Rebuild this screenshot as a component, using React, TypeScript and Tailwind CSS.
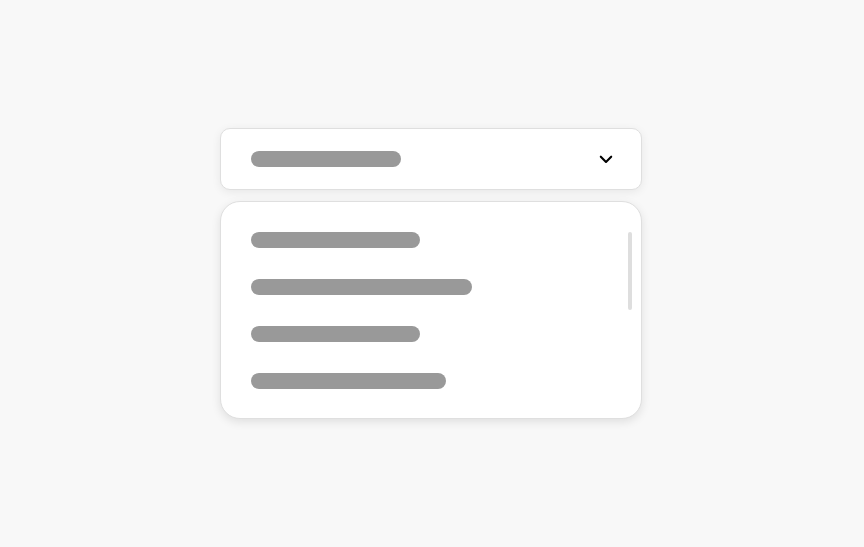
const options = [
  { id: 1, width: "w-[169px]" },
  { id: 2, width: "w-[221px]" },
  { id: 3, width: "w-[169px]" },
  { id: 4, width: "w-[195px]" },
];

const ChevronIcon = () => (
  <svg
    viewBox="0 0 16 16"
    className="h-4 w-4 text-black"
    fill="none"
    stroke="currentColor"
    strokeWidth="2.1"
    strokeLinecap="round"
    strokeLinejoin="round"
    aria-hidden="true"
  >
    <path d="M2.8 5.7 8 10.9l5.2-5.2" />
  </svg>
);

const App = () => {
  return (
    <main className="flex min-h-screen items-center justify-center bg-[#f8f8f8] pr-[18px] pl-4">
      <div className="flex w-full max-w-[422px] flex-col gap-[11px]">
        <button
          type="button"
          aria-label="Select an option"
          aria-haspopup="listbox"
          aria-expanded="true"
          aria-controls="options"
          className="flex w-full items-center justify-between rounded-[10px] border border-[#dfdfdf] bg-white py-[22px] pr-[27px] pl-[30px] shadow-[0_2px_10px_rgba(0,0,0,0.07)]"
        >
          <span className="h-4 w-[150px] rounded-full bg-[#999999]" />
          <ChevronIcon />
        </button>

        <div className="flex items-start justify-between rounded-[20px] border border-[#dfdfdf] bg-white pt-[30px] pr-[9px] pb-[29px] pl-[30px] shadow-[0_3px_10px_rgba(0,0,0,0.1)]">
          <ul id="options" role="listbox" aria-label="Options" className="flex flex-col gap-[31px]">
            {options.map((option) => (
              <li
                key={option.id}
                role="option"
                aria-selected="false"
                aria-label={`Option ${option.id}`}
                className={`h-4 rounded-full bg-[#999999] ${option.width}`}
              />
            ))}
          </ul>
          <div className="h-[78px] w-1 rounded-[2px] bg-[#dedede]" />
        </div>
      </div>
    </main>
  );
};

export default App;
